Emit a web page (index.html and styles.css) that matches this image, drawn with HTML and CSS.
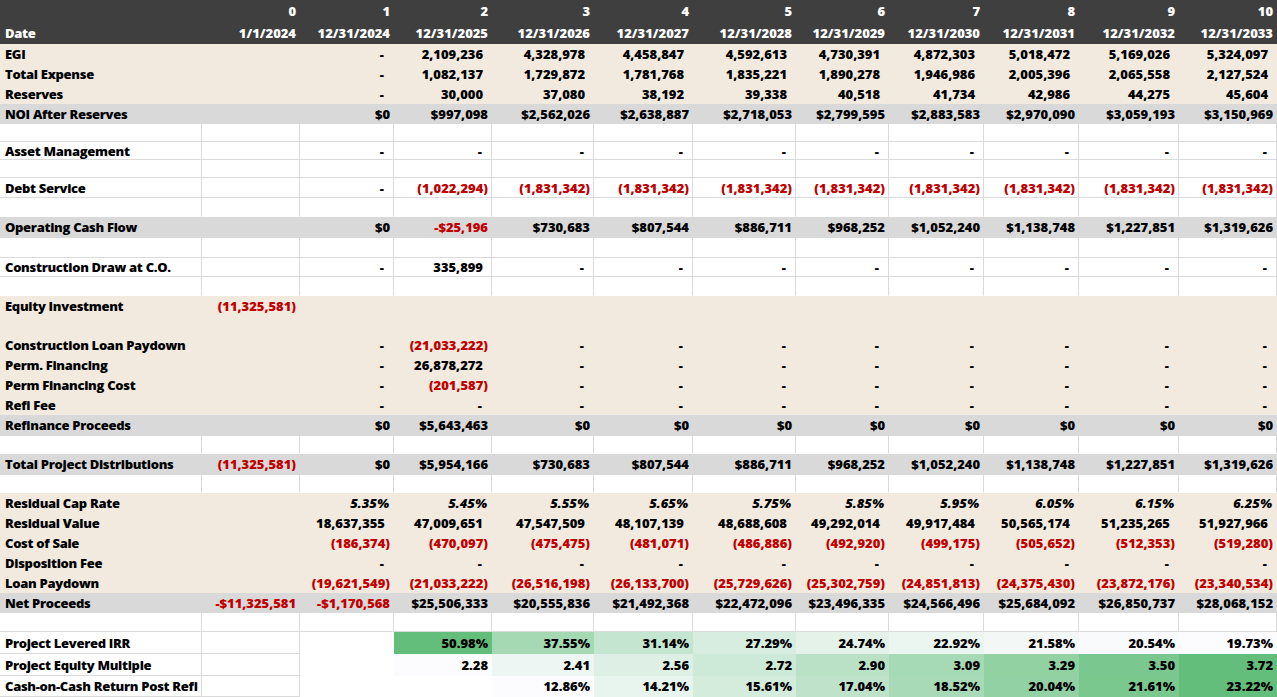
FILE: index.html
```html
<!DOCTYPE html>
<html>
<head>
<meta charset="utf-8">
<link rel="stylesheet" href="styles.css">
</head>
<body>
<table class="sheet">
<colgroup>
<col class="w202"><col class="w98"><col class="w94"><col class="w98"><col class="w102"><col class="w99"><col class="w103"><col class="w93"><col class="w95"><col class="w95"><col class="w100"><col class="w98">
</colgroup>
<tbody>
<tr class="hd h22"><td class="lbl"></td><td>0</td><td>1</td><td>2</td><td>3</td><td>4</td><td>5</td><td>6</td><td>7</td><td>8</td><td>9</td><td>10</td></tr>
<tr class="hd h22"><td class="lbl">Date</td><td>1/1/2024</td><td>12/31/2024</td><td>12/31/2025</td><td>12/31/2026</td><td>12/31/2027</td><td>12/31/2028</td><td>12/31/2029</td><td>12/31/2030</td><td>12/31/2031</td><td>12/31/2032</td><td>12/31/2033</td></tr>

<tr class="bg h20"><td class="lbl">EGI</td><td></td><td class="dash">-</td><td class="n">2,109,236</td><td class="n">4,328,978</td><td class="n">4,458,847</td><td class="n">4,592,613</td><td class="n">4,730,391</td><td class="n">4,872,303</td><td class="n">5,018,472</td><td class="n">5,169,026</td><td class="n">5,324,097</td></tr>
<tr class="bg h20"><td class="lbl">Total Expense</td><td></td><td class="dash">-</td><td class="n">1,082,137</td><td class="n">1,729,872</td><td class="n">1,781,768</td><td class="n">1,835,221</td><td class="n">1,890,278</td><td class="n">1,946,986</td><td class="n">2,005,396</td><td class="n">2,065,558</td><td class="n">2,127,524</td></tr>
<tr class="bg h20"><td class="lbl">Reserves</td><td></td><td class="dash">-</td><td class="n">30,000</td><td class="n">37,080</td><td class="n">38,192</td><td class="n">39,338</td><td class="n">40,518</td><td class="n">41,734</td><td class="n">42,986</td><td class="n">44,275</td><td class="n">45,604</td></tr>
<tr class="gr h20"><td class="lbl">NOI After Reserves</td><td></td><td>$0</td><td>$997,098</td><td>$2,562,026</td><td>$2,638,887</td><td>$2,718,053</td><td>$2,799,595</td><td>$2,883,583</td><td>$2,970,090</td><td>$3,059,193</td><td>$3,150,969</td></tr>

<tr class="wh h18"><td class="lbl"></td><td></td><td></td><td></td><td></td><td></td><td></td><td></td><td></td><td></td><td></td><td></td></tr>
<tr class="wh h18"><td class="lbl">Asset Management</td><td></td><td class="dash">-</td><td class="dash">-</td><td class="dash">-</td><td class="dash">-</td><td class="dash">-</td><td class="dash">-</td><td class="dash">-</td><td class="dash">-</td><td class="dash">-</td><td class="dash">-</td></tr>
<tr class="wh h18"><td class="lbl"></td><td></td><td></td><td></td><td></td><td></td><td></td><td></td><td></td><td></td><td></td><td></td></tr>
<tr class="wh h20"><td class="lbl">Debt Service</td><td></td><td class="dash">-</td><td class="neg">(1,022,294)</td><td class="neg">(1,831,342)</td><td class="neg">(1,831,342)</td><td class="neg">(1,831,342)</td><td class="neg">(1,831,342)</td><td class="neg">(1,831,342)</td><td class="neg">(1,831,342)</td><td class="neg">(1,831,342)</td><td class="neg">(1,831,342)</td></tr>
<tr class="wh pre h19"><td class="lbl"></td><td></td><td></td><td></td><td></td><td></td><td></td><td></td><td></td><td></td><td></td><td></td></tr>
<tr class="gr h21"><td class="lbl">Operating Cash Flow</td><td></td><td>$0</td><td class="neg">-$25,196</td><td>$730,683</td><td>$807,544</td><td>$886,711</td><td>$968,252</td><td>$1,052,240</td><td>$1,138,748</td><td>$1,227,851</td><td>$1,319,626</td></tr>
<tr class="wh h20"><td class="lbl"></td><td></td><td></td><td></td><td></td><td></td><td></td><td></td><td></td><td></td><td></td><td></td></tr>
<tr class="wh h19"><td class="lbl">Construction Draw at C.O.</td><td></td><td class="dash">-</td><td class="n">335,899</td><td class="dash">-</td><td class="dash">-</td><td class="dash">-</td><td class="dash">-</td><td class="dash">-</td><td class="dash">-</td><td class="dash">-</td><td class="dash">-</td></tr>
<tr class="wh pre h19"><td class="lbl"></td><td></td><td></td><td></td><td></td><td></td><td></td><td></td><td></td><td></td><td></td><td></td></tr>

<tr class="bg h20"><td class="lbl">Equity Investment</td><td class="neg">(11,325,581)</td><td></td><td></td><td></td><td></td><td></td><td></td><td></td><td></td><td></td><td></td></tr>
<tr class="bg h19"><td class="lbl"></td><td></td><td></td><td></td><td></td><td></td><td></td><td></td><td></td><td></td><td></td><td></td></tr>
<tr class="bg h20"><td class="lbl">Construction Loan Paydown</td><td></td><td class="dash">-</td><td class="neg">(21,033,222)</td><td class="dash">-</td><td class="dash">-</td><td class="dash">-</td><td class="dash">-</td><td class="dash">-</td><td class="dash">-</td><td class="dash">-</td><td class="dash">-</td></tr>
<tr class="bg h20"><td class="lbl">Perm. Financing</td><td></td><td class="dash">-</td><td class="n">26,878,272</td><td class="dash">-</td><td class="dash">-</td><td class="dash">-</td><td class="dash">-</td><td class="dash">-</td><td class="dash">-</td><td class="dash">-</td><td class="dash">-</td></tr>
<tr class="bg h20"><td class="lbl">Perm Financing Cost</td><td></td><td class="dash">-</td><td class="neg">(201,587)</td><td class="dash">-</td><td class="dash">-</td><td class="dash">-</td><td class="dash">-</td><td class="dash">-</td><td class="dash">-</td><td class="dash">-</td><td class="dash">-</td></tr>
<tr class="bg h20"><td class="lbl">Refi Fee</td><td></td><td class="dash">-</td><td class="dash">-</td><td class="dash">-</td><td class="dash">-</td><td class="dash">-</td><td class="dash">-</td><td class="dash">-</td><td class="dash">-</td><td class="dash">-</td><td class="dash">-</td></tr>
<tr class="gr h21"><td class="lbl">Refinance Proceeds</td><td></td><td>$0</td><td>$5,643,463</td><td>$0</td><td>$0</td><td>$0</td><td>$0</td><td>$0</td><td>$0</td><td>$0</td><td>$0</td></tr>
<tr class="wh pre h18"><td class="lbl"></td><td></td><td></td><td></td><td></td><td></td><td></td><td></td><td></td><td></td><td></td><td></td></tr>
<tr class="gr h21"><td class="lbl">Total Project Distributions</td><td class="neg">(11,325,581)</td><td>$0</td><td>$5,954,166</td><td>$730,683</td><td>$807,544</td><td>$886,711</td><td>$968,252</td><td>$1,052,240</td><td>$1,138,748</td><td>$1,227,851</td><td>$1,319,626</td></tr>
<tr class="wh pre h18"><td class="lbl"></td><td></td><td></td><td></td><td></td><td></td><td></td><td></td><td></td><td></td><td></td><td></td></tr>

<tr class="bg h20"><td class="lbl">Residual Cap Rate</td><td></td><td class="pct">5.35%</td><td class="pct">5.45%</td><td class="pct">5.55%</td><td class="pct">5.65%</td><td class="pct">5.75%</td><td class="pct">5.85%</td><td class="pct">5.95%</td><td class="pct">6.05%</td><td class="pct">6.15%</td><td class="pct">6.25%</td></tr>
<tr class="bg h20"><td class="lbl">Residual Value</td><td></td><td class="n">18,637,355</td><td class="n">47,009,651</td><td class="n">47,547,509</td><td class="n">48,107,139</td><td class="n">48,688,608</td><td class="n">49,292,014</td><td class="n">49,917,484</td><td class="n">50,565,174</td><td class="n">51,235,265</td><td class="n">51,927,966</td></tr>
<tr class="bg h20"><td class="lbl">Cost of Sale</td><td></td><td class="neg">(186,374)</td><td class="neg">(470,097)</td><td class="neg">(475,475)</td><td class="neg">(481,071)</td><td class="neg">(486,886)</td><td class="neg">(492,920)</td><td class="neg">(499,175)</td><td class="neg">(505,652)</td><td class="neg">(512,353)</td><td class="neg">(519,280)</td></tr>
<tr class="bg h20"><td class="lbl">Disposition Fee</td><td></td><td class="dash">-</td><td class="dash">-</td><td class="dash">-</td><td class="dash">-</td><td class="dash">-</td><td class="dash">-</td><td class="dash">-</td><td class="dash">-</td><td class="dash">-</td><td class="dash">-</td></tr>
<tr class="bg h20"><td class="lbl">Loan Paydown</td><td></td><td class="neg">(19,621,549)</td><td class="neg">(21,033,222)</td><td class="neg">(26,516,198)</td><td class="neg">(26,133,700)</td><td class="neg">(25,729,626)</td><td class="neg">(25,302,759)</td><td class="neg">(24,851,813)</td><td class="neg">(24,375,430)</td><td class="neg">(23,872,176)</td><td class="neg">(23,340,534)</td></tr>
<tr class="gr h20"><td class="lbl">Net Proceeds</td><td class="neg">-$11,325,581</td><td class="neg">-$1,170,568</td><td>$25,506,333</td><td>$20,555,836</td><td>$21,492,368</td><td>$22,472,096</td><td>$23,496,335</td><td>$24,566,496</td><td>$25,684,092</td><td>$26,850,737</td><td>$28,068,152</td></tr>
<tr class="wh h19"><td class="lbl"></td><td></td><td></td><td></td><td></td><td></td><td></td><td></td><td></td><td></td><td></td><td></td></tr>

<tr class="wh h22"><td class="lbl">Project Levered IRR</td><td></td><td class="blank"></td><td class="heat" style="background:#63be7b">50.98%</td><td class="heat" style="background:#a5d9b4">37.55%</td><td class="heat" style="background:#c4e5cf">31.14%</td><td class="heat" style="background:#d7eddf">27.29%</td><td class="heat" style="background:#e4f2ea">24.74%</td><td class="heat" style="background:#ecf6f1">22.92%</td><td class="heat" style="background:#f3f8f7">21.58%</td><td class="heat" style="background:#f8fafc">20.54%</td><td class="heat" style="background:#fcfcff">19.73%</td></tr>
<tr class="wh h22"><td class="lbl">Project Equity Multiple</td><td></td><td class="blank"></td><td class="heat" style="background:#fcfcff">2.28</td><td class="heat" style="background:#eef6f3">2.41</td><td class="heat" style="background:#def0e5">2.56</td><td class="heat" style="background:#cde9d7">2.72</td><td class="heat" style="background:#bae1c6">2.90</td><td class="heat" style="background:#a6d9b5">3.09</td><td class="heat" style="background:#91d1a2">3.29</td><td class="heat" style="background:#7ac78f">3.50</td><td class="heat" style="background:#63be7b">3.72</td></tr>
<tr class="wh h21"><td class="lbl">Cash-on-Cash Return Post Refi</td><td></td><td class="blank"></td><td class="blank"></td><td class="heat" style="background:#fcfcff">12.86%</td><td class="heat" style="background:#e8f4ee">14.21%</td><td class="heat" style="background:#d3ecdc">15.61%</td><td class="heat" style="background:#bee3ca">17.04%</td><td class="heat" style="background:#a8dab7">18.52%</td><td class="heat" style="background:#92d1a4">20.04%</td><td class="heat" style="background:#7bc88f">21.61%</td><td class="heat" style="background:#63be7b">23.22%</td></tr>
</tbody>
</table>
</body>
</html>
```

FILE: styles.css
```css
html, body {
  margin: 0;
  padding: 0;
  background: #ffffff;
}

.sheet {
  table-layout: fixed;
  width: 1277px;
  border-collapse: separate;
  border-spacing: 0;
  font-family: "Open Sans", "Noto Sans", sans-serif;
  font-weight: 800;
  font-size: 13px;
  color: #000;
}

.w202 { width: 202px; }
.w93 { width: 93px; }
.w94 { width: 94px; }
.w95 { width: 95px; }
.w98 { width: 98px; }
.w99 { width: 99px; }
.w100 { width: 100px; }
.w102 { width: 102px; }
.w103 { width: 103px; }

.sheet td {
  box-sizing: border-box;
  padding: 0 3px 0 0;
  text-align: right;
  white-space: nowrap;
  overflow: hidden;
  vertical-align: middle;
  line-height: 16px;
  border-right: 1px solid transparent;
  border-bottom: 1px solid transparent;
}

.sheet td.lbl {
  text-align: left;
  padding: 0 0 0 5px;
  letter-spacing: -0.3px;
}

.h18 { height: 18px; }
.h19 { height: 19px; }
.h20 { height: 20px; }
.h21 { height: 21px; }
.h22 { height: 22px; }

.hd td {
  background: #3f3f3f;
  color: #ffffff;
}

.bg td { background: #f2eadf; }
.gr td { background: #d9d9d9; }

.wh td {
  background: #ffffff;
  border-right-color: #dadada;
  border-bottom-color: #dadada;
}

.wh.pre td { border-bottom-color: #ffffff; }

.sheet td.n { padding-right: 8px; }
.sheet td.dash { padding-right: 9px; }
.sheet td.neg { color: #c00000; }
.sheet td.pct { font-style: italic; padding-right: 4px; }

.wh td.blank {
  border-right-color: #ffffff;
  border-bottom-color: #ffffff;
}

.wh td.heat {
  border-right-color: transparent;
  border-bottom-color: transparent;
}
```
